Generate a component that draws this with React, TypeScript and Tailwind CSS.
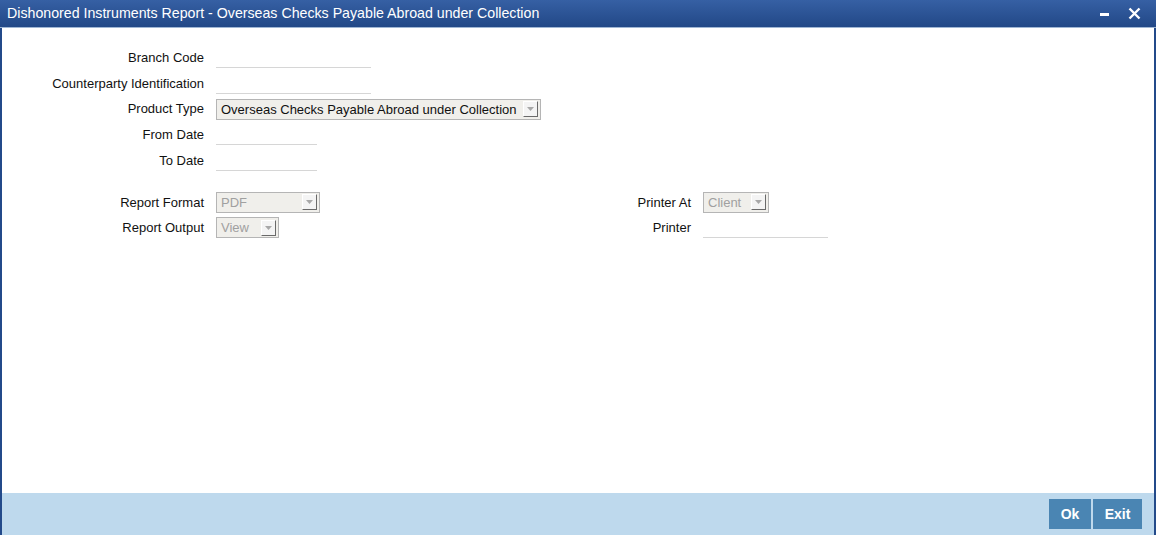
import React from "react";

function Select({ value, width, disabled }: { value: string; width: string; disabled?: boolean }) {
  return (
    <div className={`flex items-center h-[21px] ${width} border border-[#b5b5b5] bg-[#f0efeb] pl-[4px] pr-[2px]`}>
      <span className={`flex-1 text-[13px] leading-none whitespace-nowrap ${disabled ? "text-[#a0a0a0]" : "text-[#111]"}`}>
        {value}
      </span>
      <span className="w-[15px] h-[16px] flex items-center justify-center bg-[#f4f4f4] border-t border-l border-white border-r border-b border-r-[#6a6a6a] border-b-[#6a6a6a]">
        <svg width="7" height="4" viewBox="0 0 7 4">
          <path d="M0 0 L7 0 L3.5 4 Z" fill="#a8a8a8" />
        </svg>
      </span>
    </div>
  );
}

function Field({ width }: { width: string }) {
  return <div className={`h-[21px] ${width} border-b border-[#d6d6d6]`} />;
}

function Row({ label, children }: { label: string; children: React.ReactNode }) {
  return (
    <div className="flex items-center h-[25.7px]">
      <div className="w-[202px] text-right text-[13px] text-[#111] whitespace-nowrap">{label}</div>
      <div className="ml-[12px]">{children}</div>
    </div>
  );
}

export default function App() {
  return (
    <div className="w-[1156px] h-[541px] bg-white" style={{ fontFamily: '"Liberation Sans", Arial, sans-serif' }}>
      <div className="h-[535px] flex flex-col border-l-2 border-r-2 border-[#234a8a]">
        {/* Title bar */}
        <div className="h-[28px] flex items-center justify-between bg-gradient-to-b from-[#3660a4] to-[#224887] border-b border-[#9fb6d4] -mx-[2px] px-[7px]">
          <span className="text-white text-[14.2px] leading-none">
            Dishonored Instruments Report - Overseas Checks Payable Abroad under Collection
          </span>
          <div className="flex items-center gap-[19px] pr-[8px]">
            <div className="w-[9px] h-[3px] bg-white mt-[2px]" />
            <svg width="13" height="13" viewBox="0 0 13 13">
              <path d="M1.5 1.5 L11.5 11.5 M11.5 1.5 L1.5 11.5" stroke="white" strokeWidth="2.4" />
            </svg>
          </div>
        </div>

        {/* Body */}
        <div className="flex-1 pt-[17px]">
          <Row label="Branch Code"><Field width="w-[155px]" /></Row>
          <Row label="Counterparty Identification"><Field width="w-[155px]" /></Row>
          <Row label="Product Type">
            <Select value="Overseas Checks Payable Abroad under Collection" width="w-[325px]" />
          </Row>
          <Row label="From Date"><Field width="w-[101px]" /></Row>
          <Row label="To Date"><Field width="w-[101px]" /></Row>

          <div className="flex mt-[16px]">
            <div className="w-[487px]">
              <Row label="Report Format"><Select value="PDF" width="w-[104px]" disabled /></Row>
              <Row label="Report Output"><Select value="View" width="w-[63px]" disabled /></Row>
            </div>
            <div>
              <Row label="Printer At"><Select value="Client" width="w-[66px]" disabled /></Row>
              <Row label="Printer"><Field width="w-[125px]" /></Row>
            </div>
          </div>
        </div>

        {/* Footer */}
        <div className="h-[42px] bg-[#bed9ed] flex items-center justify-end pr-[12px] gap-[2px]">
          <button className="w-[42px] h-[30px] bg-[#4a85b3] text-white text-[14px] font-bold">Ok</button>
          <button className="w-[49px] h-[30px] bg-[#4a85b3] text-white text-[14px] font-bold">Exit</button>
        </div>
      </div>
    </div>
  );
}
